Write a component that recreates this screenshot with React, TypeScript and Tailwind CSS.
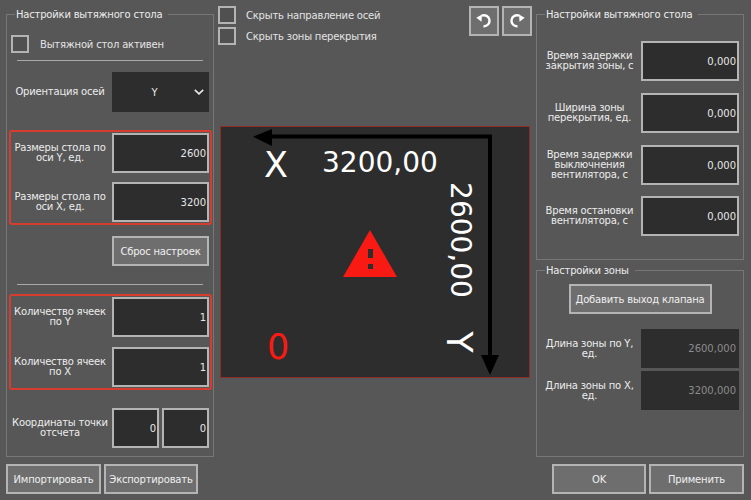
const font = "font-['DejaVu_Sans',sans-serif]";
const label = 'text-[10px] tracking-[-0.2px]';

function Field({ value, muted, w = 'w-[97px]', h = 'h-10' }: { value: string; muted?: boolean; w?: string; h?: string }) {
  return (
    <div
      className={`${w} ${h} shrink-0 flex items-center justify-end bg-[#2d2d2d] text-[10px] ${
        muted ? 'pr-[3px] text-[#8c8c8c]' : 'pr-[1px] border-2 border-[#b4b4b4] text-[#e8e8e8]'
      }`}
    >
      {value}
    </div>
  );
}

function Row({ text, children, className = '' }: { text: string; children: React.ReactNode; className?: string }) {
  return (
    <div className={`flex items-center ${className}`}>
      <div className={`flex-1 pr-[3px] text-center leading-[10px] text-[#ececec] whitespace-pre ${label}`}>{text}</div>
      {children}
    </div>
  );
}

function Btn({ text, className = '' }: { text: string; className?: string }) {
  return (
    <div className={`h-[30px] flex items-center justify-center border-2 border-[#b4b4b4] bg-[#6e6e6e] text-[#f0f0f0] whitespace-pre ${label} ${className}`}>
      {text}
    </div>
  );
}

function Check({ text, gap = 'gap-[10px]' }: { text: string; gap?: string }) {
  return (
    <div className={`flex items-center h-[18px] ${gap}`}>
      <div className="w-[18px] h-[18px] border-2 border-[#b4b4b4] bg-[#505050]" />
      <span className={`text-[#e4e4e4] ${label}`}>{text}</span>
    </div>
  );
}

function Group({ title, className = '', children }: { title: string; className?: string; children: React.ReactNode }) {
  return (
    <div className={`relative border border-[#777777] ${className}`}>
      <span className={`absolute left-[8px] -top-[7px] px-[1px] bg-[#575757] leading-[13px] pr-[6px] text-[#ececec] ${label}`}>{title}</span>
      {children}
    </div>
  );
}

function RotateLeft() {
  return (
    <svg width="16" height="16" viewBox="0 0 16 16" fill="none">
      <path d="M5.8 2.7A5.5 5.5 0 1 1 7.5 13.2" stroke="white" strokeWidth="2.4" />
      <path d="M0.3 4.7L6 1.5L5.5 8.7Z" fill="white" />
    </svg>
  );
}

function RotateRight() {
  return (
    <svg width="16" height="16" viewBox="0 0 16 16" fill="none">
      <path d="M10.2 2.7A5.5 5.5 0 1 0 8.5 13.2" stroke="white" strokeWidth="2.4" />
      <path d="M15.7 4.7L10 1.5L10.5 8.7Z" fill="white" />
    </svg>
  );
}

function Chevron() {
  return (
    <svg width="10" height="6" viewBox="0 0 10 6" fill="none">
      <path d="M0.8 0.8L5 4.8L9.2 0.8" stroke="#e8e8e8" strokeWidth="1.6" />
    </svg>
  );
}

function Canvas() {
  return (
    <div className="relative mx-[2px] mt-[81px] h-[252px] border border-[#8e2c28] bg-[#2d2d2d] overflow-hidden text-white">
      <svg className="absolute inset-0" width="310" height="250" viewBox="0 0 310 250" fill="none">
        <path d="M50 9.5H269V228" stroke="black" strokeWidth="4" />
        <path d="M32 9.7L51 2V19Z" fill="black" />
        <path d="M260 228H278L269 248Z" fill="black" />
        <path d="M149 103L176 150H122Z" fill="#fa1a14" />
        <path d="M147 122H152V131H147ZM147 137H152V142H147Z" fill="#2d2d2d" />
      </svg>
      <span className="absolute left-[43px] top-[18px] w-[24px] text-center text-[35px] leading-[40px]">X</span>
      <span className="absolute left-[101px] top-[20px] text-[28px] leading-[32px]">3200,00</span>
      <span className="absolute left-[46px] top-[200px] w-[22px] text-center text-[35px] leading-[40px] text-[#fa1a14]">0</span>
      <span className="absolute left-[181px] top-[97px] w-[116px] text-center text-[28px] leading-[32px] rotate-90">2600,00</span>
      <span className="absolute left-[227px] top-[195px] w-[22px] text-center text-[35px] leading-[40px] rotate-90">Y</span>
    </div>
  );
}

export default function App() {
  return (
    <div className={`w-[751px] h-[500px] overflow-hidden flex bg-[#575757] pl-[6px] ${font}`}>
      <div className="w-[208px] shrink-0 pt-[14px]">
        <Group title="Настройки вытяжного стола" className="h-[443px] px-[4px]">
          <div className="pt-[20px]"><Check text="Вытяжной стол активен" gap="gap-[11px]" /></div>
          <div className="mt-[7px] mx-[6px] h-px bg-[#a8a8a8]" />
          <Row text="Ориентация осей" className="mt-[11px]">
            <div className="w-[97px] h-10 shrink-0 flex items-center bg-[#2d2d2d] text-[10px] text-[#e8e8e8]">
              <span className="flex-1 text-center pl-[3px]">Y</span>
              <span className="pr-[5px] flex"><Chevron /></span>
            </div>
          </Row>
          <div className="mt-[18px] -mx-[2px] -mr-[3px] border-2 border-[#d83c2e] rounded-[3px] h-[95px] pt-[1px] pr-[1px]">
            <Row text={'Размеры стола по\nоси Y, ед.'}><Field value="2600" /></Row>
            <Row text={'Размеры стола по\nоси X, ед.'} className="mt-[9px]"><Field value="3200" /></Row>
          </div>
          <div className="mt-[11px] flex justify-end"><Btn text="Сброс настроек" className="w-[97px]" /></div>
          <div className="mt-[18px] mx-[6px] h-px bg-[#a8a8a8]" />
          <div className="mt-[9px] -mx-[2px] -mr-[3px] border-2 border-[#d83c2e] rounded-[3px] h-[96px] pt-[1px] pr-[1px]">
            <Row text={'Количество ячеек\nпо Y'}><Field value="1" /></Row>
            <Row text={'Количество ячеек\nпо X'} className="mt-[10px]"><Field value="1" /></Row>
          </div>
          <Row text={'Координаты точки\nотсчета'} className="mt-[18px]">
            <div className="flex gap-[3px]">
              <Field value="0" w="w-[47px]" />
              <Field value="0" w="w-[47px]" />
            </div>
          </Row>
        </Group>
        <div className="mt-[7px] flex gap-[3px]">
          <Btn text="Импортировать" className="w-[95px]" />
          <Btn text="Экспортировать" className="w-[94px]" />
        </div>
      </div>

      <div className="w-[314px] shrink-0 mx-[4px] pt-[6px] relative">
        <div className="flex flex-col gap-[3px]">
          <Check text="Скрыть направление осей" />
          <Check text="Скрыть зоны перекрытия" />
        </div>
        <div className="absolute top-[6px] right-0 flex gap-[3px]">
          <div className="w-[30px] h-[30px] flex items-center justify-center border-2 border-[#b4b4b4] bg-[#6e6e6e]"><RotateLeft /></div>
          <div className="w-[30px] h-[30px] flex items-center justify-center border-2 border-[#b4b4b4] bg-[#6e6e6e]"><RotateRight /></div>
        </div>
        <Canvas />
      </div>

      <div className="w-[208px] shrink-0 pt-[14px]">
        <Group title="Настройки вытяжного стола" className="h-[246px] px-[4px] pt-[26px] flex flex-col gap-[12px]">
          <Row text={'Время задержки\nзакрытия зоны, с'}><Field value="0,000" w="w-[98px]" /></Row>
          <Row text={'Ширина зоны\nперекрытия, ед.'}><Field value="0,000" w="w-[98px]" /></Row>
          <Row text={'Время задержки\nвыключнения\nвентилятора, с'}><Field value="0,000" w="w-[98px]" /></Row>
          <Row text={'Время остановки\nвентилятора, с'} className="-mt-[1px]"><Field value="0,000" w="w-[98px]" /></Row>
        </Group>
        <Group title="Настройки зоны" className="mt-[10px] h-[187px] px-[4px]">
          <div className="pt-[13px] flex justify-center"><Btn text="Добавить выход клапана" className="w-[143px]" /></div>
          <Row text={'Длина зоны по Y,\nед.'} className="mt-[15px]"><Field value="2600,000" muted w="w-[98px]" h="h-[39px]" /></Row>
          <Row text={'Длина зоны по X,\nед.'} className="mt-[3px]"><Field value="3200,000" muted w="w-[98px]" h="h-[39px]" /></Row>
        </Group>
        <div className="mt-[7px] flex justify-end gap-[3px]">
          <Btn text="OK" className="w-[94px]" />
          <Btn text="Применить" className="w-[95px]" />
        </div>
      </div>
    </div>
  );
}
